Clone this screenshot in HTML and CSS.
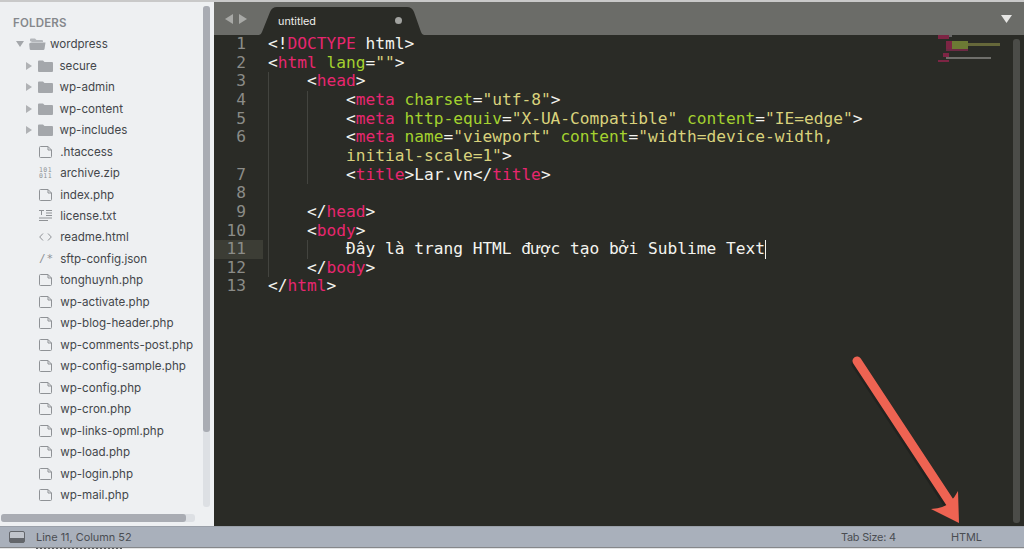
FILE: index.html
```html
<!DOCTYPE html>
<html lang="vi">
<head>
<meta charset="utf-8">
<title>untitled</title>
<link rel="stylesheet" href="styles.css">
</head>
<body>
<svg class="defs" width="0" height="0" aria-hidden="true">
  <symbol id="folder" viewBox="0 0 15 12"><path d="M0 1.5Q0 .5 1 .5H5L6.5 2H14Q15 2 15 3V11Q15 12 14 12H1Q0 12 0 11Z" fill="#a4a7ab"/></symbol>
  <symbol id="file" viewBox="0 0 13 12"><path d="M.5 1.5Q.5.5 1.5.5H9L12.5 4V10.5Q12.5 11.5 11.5 11.5H1.5Q.5 11.5 .5 10.5ZM9 .5V4H12.5" fill="none" stroke="#8f9296" stroke-width="1"/></symbol>
  <symbol id="arrow-right" viewBox="0 0 6 8"><path d="M0 0L6 4L0 8Z" fill="#b0b2b5"/></symbol>
</svg>
<div class="app">
  <div class="workspace">
    <aside class="sidebar">
      <div class="tree">
        <h2 class="folders-title">FOLDERS</h2>
        <div class="row root"><svg class="twisty-open" width="8" height="6" viewBox="0 0 8 6"><path d="M0 0H8L4 6Z" fill="#a4a7ab"/></svg><svg class="icon-folder" width="17" height="12" viewBox="0 0 17 12"><path d="M1 3V1.5Q1 .5 2 .5H6L7.5 2H13Q14 2 14 3V4H3Z" fill="#b4b7bb"/><path d="M2.5 4.5H16.5L15.5 11Q15.3 12 14.3 12H1.8Q.8 12 .7 11L.2 6Q.2 4.5 2.5 4.5Z" fill="#a4a7ab"/></svg><span>wordpress</span></div>
        <div class="row child"><svg class="twisty" width="6" height="8"><use href="#arrow-right"/></svg><svg class="icon" width="15" height="12"><use href="#folder"/></svg><span>secure</span></div>
        <div class="row child"><svg class="twisty" width="6" height="8"><use href="#arrow-right"/></svg><svg class="icon" width="15" height="12"><use href="#folder"/></svg><span>wp-admin</span></div>
        <div class="row child"><svg class="twisty" width="6" height="8"><use href="#arrow-right"/></svg><svg class="icon" width="15" height="12"><use href="#folder"/></svg><span>wp-content</span></div>
        <div class="row child"><svg class="twisty" width="6" height="8"><use href="#arrow-right"/></svg><svg class="icon" width="15" height="12"><use href="#folder"/></svg><span>wp-includes</span></div>
        <div class="row file"><svg class="icon" width="13" height="12"><use href="#file"/></svg><span>.htaccess</span></div>
        <div class="row file"><span class="binary">101<br>011</span><span>archive.zip</span></div>
        <div class="row file"><svg class="icon" width="13" height="12"><use href="#file"/></svg><span>index.php</span></div>
        <div class="row file"><svg class="icon" width="13" height="11" viewBox="0 0 13 11"><path d="M0 .5H5M2.5 .5V5M7 .5H13M7 3H13M7 5.5H13M0 8H13M0 10.5H9" fill="none" stroke="#8f9296"/></svg><span>license.txt</span></div>
        <div class="row file"><svg class="icon" width="13" height="8" viewBox="0 0 13 8"><path d="M4 .5L.7 4L4 7.5M9 .5L12.3 4L9 7.5" fill="none" stroke="#8f9296"/></svg><span>readme.html</span></div>
        <div class="row file"><span class="comment-glyph">/*</span><span>sftp-config.json</span></div>
        <div class="row file"><svg class="icon" width="13" height="12"><use href="#file"/></svg><span>tonghuynh.php</span></div>
        <div class="row file"><svg class="icon" width="13" height="12"><use href="#file"/></svg><span>wp-activate.php</span></div>
        <div class="row file"><svg class="icon" width="13" height="12"><use href="#file"/></svg><span>wp-blog-header.php</span></div>
        <div class="row file"><svg class="icon" width="13" height="12"><use href="#file"/></svg><span>wp-comments-post.php</span></div>
        <div class="row file"><svg class="icon" width="13" height="12"><use href="#file"/></svg><span>wp-config-sample.php</span></div>
        <div class="row file"><svg class="icon" width="13" height="12"><use href="#file"/></svg><span>wp-config.php</span></div>
        <div class="row file"><svg class="icon" width="13" height="12"><use href="#file"/></svg><span>wp-cron.php</span></div>
        <div class="row file"><svg class="icon" width="13" height="12"><use href="#file"/></svg><span>wp-links-opml.php</span></div>
        <div class="row file"><svg class="icon" width="13" height="12"><use href="#file"/></svg><span>wp-load.php</span></div>
        <div class="row file"><svg class="icon" width="13" height="12"><use href="#file"/></svg><span>wp-login.php</span></div>
        <div class="row file"><svg class="icon" width="13" height="12"><use href="#file"/></svg><span>wp-mail.php</span></div>
      </div>
      <div class="v-scroll"><div class="v-thumb"></div></div>
      <div class="h-scroll"><div class="h-thumb"></div></div>
    </aside>
    <main class="editor">
      <div class="tabbar">
        <div class="nav-arrows">
          <svg width="8" height="10" viewBox="0 0 8 10"><path d="M8 0V10L0 5Z" fill="#a8a9a6"/></svg>
          <svg width="8" height="10" viewBox="0 0 8 10"><path d="M0 0V10L8 5Z" fill="#a8a9a6"/></svg>
        </div>
        <div class="tab">
          <svg class="tab-bg" width="168" height="28" viewBox="0 0 168 28"><path d="M0 28H2Q4 28 5 25L13 5Q15 0 20 0H150Q155 0 157 5L164 25Q165 28 167 28H168Z" fill="#2a2b26"/></svg>
          <span class="tab-label">untitled</span>
          <span class="tab-dot"></span>
        </div>
        <svg class="tab-menu" width="11" height="8" viewBox="0 0 11 8"><path d="M0 0H11L5.5 8Z" fill="#e6e6e4"/></svg>
      </div>
      <div class="code">
        <div class="line"><span class="num">1</span><code><span class="p">&lt;!</span><span class="k">DOCTYPE</span> html&gt;</code></div>
        <div class="line"><span class="num">2</span><code>&lt;<span class="k">html</span> <span class="a">lang</span>=<span class="s">""</span>&gt;</code></div>
        <div class="line"><span class="num">3</span><code><i class="ind"></i>&lt;<span class="k">head</span>&gt;</code></div>
        <div class="line"><span class="num">4</span><code><i class="ind"></i><i class="ind"></i>&lt;<span class="k">meta</span> <span class="a">charset</span>=<span class="s">"utf-8"</span>&gt;</code></div>
        <div class="line"><span class="num">5</span><code><i class="ind"></i><i class="ind"></i>&lt;<span class="k">meta</span> <span class="a">http-equiv</span>=<span class="s">"X-UA-Compatible"</span> <span class="a">content</span>=<span class="s">"IE=edge"</span>&gt;</code></div>
        <div class="line"><span class="num">6</span><code><i class="ind"></i><i class="ind"></i>&lt;<span class="k">meta</span> <span class="a">name</span>=<span class="s">"viewport"</span> <span class="a">content</span>=<span class="s">"width=device-width,</span></code></div>
        <div class="line"><span class="num"></span><code><i class="ind"></i><i class="ind"></i><span class="s">initial-scale=1"</span>&gt;</code></div>
        <div class="line"><span class="num">7</span><code><i class="ind"></i><i class="ind"></i>&lt;<span class="k">title</span>&gt;Lar.vn&lt;/<span class="k">title</span>&gt;</code></div>
        <div class="line"><span class="num">8</span><code><i class="ind"></i></code></div>
        <div class="line"><span class="num">9</span><code><i class="ind"></i>&lt;/<span class="k">head</span>&gt;</code></div>
        <div class="line"><span class="num">10</span><code><i class="ind"></i>&lt;<span class="k">body</span>&gt;</code></div>
        <div class="line current"><span class="num">11</span><code><i class="ind"></i><i class="ind"></i>Đây là trang HTML được tạo bởi Sublime Text<i class="caret"></i></code></div>
        <div class="line"><span class="num">12</span><code><i class="ind"></i>&lt;/<span class="k">body</span>&gt;</code></div>
        <div class="line"><span class="num">13</span><code>&lt;/<span class="k">html</span>&gt;</code></div>
      </div>
      <svg class="minimap" width="64" height="30" viewBox="0 0 64 30">
        <rect x="0" y="0" width="11" height="4" fill="#7d2544"/><rect x="11" y="0" width="3" height="2" fill="#666"/>
        <rect x="8" y="6" width="6" height="9" fill="#7d2544"/><rect x="14" y="6" width="16" height="8" fill="#6c7a34"/>
        <rect x="30" y="8" width="32" height="3" fill="#66683a"/><rect x="8" y="14" width="22" height="2" fill="#6d2a44"/>
        <rect x="5" y="18" width="6" height="4" fill="#7d2544"/><rect x="8" y="22" width="45" height="2" fill="#6f6f6b"/>
        <rect x="0" y="25" width="11" height="2" fill="#7d2544"/>
      </svg>
      <div class="editor-scroll"></div>
      <svg class="callout" width="120" height="180" viewBox="0 0 120 180">
        <path d="M11 7L106 152" stroke="#1d1d1a" stroke-opacity=".6" stroke-width="9" stroke-linecap="round" transform="translate(-2 2)"/>
        <path d="M10 6L104 149" stroke="#ee6352" stroke-width="9" stroke-linecap="round"/>
        <path d="M111 136L112 168L84 154Q98 153 103 147Q108 142 111 136Z" fill="#ee6352"/>
      </svg>
    </main>
  </div>
  <footer class="status">
    <svg class="panel-icon" width="16" height="12" viewBox="0 0 16 12"><rect x=".5" y=".5" width="15" height="11" rx="1.5" fill="#c0c4cb" stroke="#63666b"/><rect x="1" y="7" width="14" height="4.5" fill="#63666b"/></svg>
    <span class="pos">Line 11, Column 52</span>
    <span class="tabsize">Tab Size: 4</span>
    <span class="syntax">HTML</span>
  </footer>
  <div class="underlap"><div class="clipped-text"></div></div>
</div>
</body>
</html>
```
FILE: styles.css
```css
* { box-sizing: border-box; }
html, body { margin: 0; height: 100%; overflow: hidden; }
body { font-family: "Inter", "Liberation Sans", sans-serif; background: #e8e8e8; }
.defs { position: absolute; }
.app { width: 1024px; height: 549px; display: flex; flex-direction: column; border-top: 2px solid #c9c9c9; }
.workspace { flex: 1; display: flex; min-height: 0; }
.status { height: 21px; flex: none; display: flex; align-items: center; background: #a9b0bb; border-top: 1px solid #9aa0a9; font-size: 10.9px; color: #4a4d52; }
.underlap { height: 2px; flex: none; background: #e4e5e6; border-top: 1px solid #85878a; padding-left: 36px; }
.clipped-text { width: 86px; height: 1px; background: repeating-linear-gradient(90deg, #55575a 0 2px, #d0d1d2 2px 4px); }

.sidebar { width: 214px; flex: none; position: relative; background: #eef0f2; }
.tree { padding-top: 13px; }
.folders-title { margin: 0 0 0 13px; height: 16px; line-height: 16px; font-size: 11.5px; font-weight: 600; color: #85888c; letter-spacing: .2px; }
.row { height: 21.48px; display: flex; align-items: center; font-size: 11.6px; color: #44474b; white-space: nowrap; }
.root { padding-left: 16px; margin-top: 2.5px; }
.root span { margin-left: 4px; }
.twisty-open { margin-right: 5px; }
.child { padding-left: 26px; }
.twisty { margin-right: 6px; }
.child .icon { margin-right: 6.5px; }
.file { padding-left: 39px; }
.file .icon { margin-right: 8.2px; }
.binary { width: 21.2px; font-size: 6.5px; line-height: 6.5px; letter-spacing: .4px; color: #8f9296; text-align: left; font-family: "DejaVu Sans Mono", monospace; }
.comment-glyph { width: 21.2px; font-size: 11px; color: #8f9296; font-family: "DejaVu Sans Mono", monospace; letter-spacing: 1px; }
.v-scroll { position: absolute; left: 203px; top: 4px; width: 7px; height: 501px; background: #dde0e4; border-radius: 3px; }
.v-thumb { height: 426px; background: #a9acb3; border-radius: 3px; }
.h-scroll { position: absolute; left: 1px; top: 512px; width: 194px; height: 8px; background: #dde0e4; border-radius: 3px; }
.h-thumb { width: 185px; height: 8px; background: #a9acb3; border-radius: 3px; }

.editor { flex: 1; position: relative; background: #2a2b26; display: flex; flex-direction: column; min-width: 0; }
.tabbar { height: 33px; flex: none; display: flex; align-items: flex-end; background: #6b6c68; position: relative; }
.nav-arrows { display: flex; gap: 6px; align-self: center; margin-left: 11px; margin-top: 1px; }
.tab { position: relative; width: 168px; height: 28px; margin-left: 10px; display: flex; align-items: center; }
.tab-bg { position: absolute; left: 0; top: 0; }
.tab-label { position: relative; margin-left: 21px; font-size: 10.8px; color: #eeeeea; }
.tab-dot { position: absolute; left: 138px; top: 10px; width: 7px; height: 7px; border-radius: 50%; background: #a2a3a0; }
.tab-menu { position: absolute; right: 12px; top: 13px; }

.code { padding-top: .1px; font-family: "DejaVu Sans Mono", monospace; font-size: 16.2px; color: #f4f4ef; }
.line { height: 18.65px; line-height: 18.65px; display: flex; white-space: pre; }
.num { width: 49px; height: 100%; flex: none; padding-right: 17px; text-align: right; color: #8b8c88; margin-right: 5px; }
code { font: inherit; display: block; height: 100%; }
.ind { display: inline-block; width: 4ch; height: 18.65px; vertical-align: top; border-left: 1px solid #43443f; }
.current .num { background: #3c3d35; color: #8b8c88; }
.k { color: #e7266f; }
.a { color: #a4d22f; }
.s { color: #d9d27c; }
.caret { display: inline-block; width: 1px; height: 18.65px; vertical-align: top; background: #f4f4ef; }

.minimap { position: absolute; left: 724px; top: 33px; }
.editor-scroll { position: absolute; left: 799px; top: 37px; width: 7px; height: 484px; background: #4b4c48; border-radius: 3px; }
.callout { position: absolute; left: 633px; top: 353px; }

.panel-icon { margin-left: 9px; }
.pos { margin-left: 11px; }
.tabsize { margin-left: auto; letter-spacing: -.2px; }
.syntax { margin-left: 55px; margin-right: 42px; }
```
